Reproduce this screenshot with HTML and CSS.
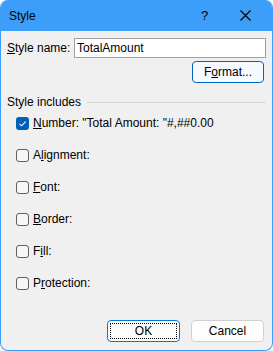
FILE: index.html
```html
<!DOCTYPE html>
<html>
<head>
<meta charset="utf-8">
<link rel="stylesheet" href="styles.css">
</head>
<body>
<div class="window">
  <div class="titlebar">
    <span class="title">Style</span>
    <span class="capbtn help">?</span>
    <span class="capbtn close">
      <svg width="11" height="11" viewBox="0 0 11 11"><path d="M0.5 0.5 L10.5 10.5 M10.5 0.5 L0.5 10.5" stroke="#000" stroke-width="1.1" fill="none"/></svg>
    </span>
  </div>
  <div class="content">
    <div class="name-row">
      <span class="label"><u>S</u>tyle name:</span>
      <div class="input">TotalAmount</div>
    </div>
    <div class="format-row">
      <div class="btn btn-accent">F<u>o</u>rmat...</div>
    </div>
    <div class="group-head">
      <span class="group-title">Style includes</span>
      <span class="group-line"></span>
    </div>
    <div class="checks">
      <div class="check-row"><span class="box checked"><svg width="13" height="13" viewBox="0 0 13 13"><path d="M3.5 6.8 L5.6 8.8 L9.6 4.6" stroke="#fff" stroke-width="1.1" fill="none"/></svg></span><span class="clabel"><u>N</u>umber: "Total Amount: "#,##0.00</span></div>
      <div class="check-row"><span class="box"></span><span class="clabel">A<u>l</u>ignment:</span></div>
      <div class="check-row"><span class="box"></span><span class="clabel"><u>F</u>ont:</span></div>
      <div class="check-row"><span class="box"></span><span class="clabel"><u>B</u>order:</span></div>
      <div class="check-row"><span class="box"></span><span class="clabel">F<u>i</u>ll:</span></div>
      <div class="check-row"><span class="box"></span><span class="clabel">P<u>r</u>otection:</span></div>
    </div>
    <div class="actions">
      <div class="btn btn-ok"><span class="focus">OK</span></div>
      <div class="btn btn-cancel">Cancel</div>
    </div>
  </div>
</div>
</body>
</html>
```
FILE: styles.css
```css
html, body {
  margin: 0;
  padding: 0;
  background: #ffffff;
}
body {
  font-family: "Liberation Sans", Arial, sans-serif;
  font-size: 12px;
  color: #000;
}
.window {
  width: 273px;
  height: 351px;
  box-sizing: border-box;
  border: 1px solid #3c9ef8;
  border-top: none;
  border-radius: 8px;
  background: #f0f0f0;
  overflow: hidden;
  display: flex;
  flex-direction: column;
}
.titlebar {
  height: 31px;
  flex: none;
  background: #3c9ef8;
  display: flex;
  align-items: center;
  padding: 0 6px 0 8px;
}
.title {
  flex: 1;
  font-size: 12px;
  padding-top: 1px;
}
.capbtn {
  width: 41px;
  height: 31px;
  display: flex;
  align-items: center;
  justify-content: center;
}
.help {
  font-size: 13px;
}
.close svg {
  display: block;
}
.content {
  flex: 1;
  display: flex;
  flex-direction: column;
  padding: 7px 6px 8px 6px;
}
.name-row {
  display: flex;
  align-items: center;
  height: 20px;
}
.label {
  width: 67px;
  flex: none;
}
.input {
  flex: 1;
  height: 20px;
  box-sizing: border-box;
  border: 1px solid #a0a0a0;
  background: #fff;
  padding: 0 2px;
  line-height: 18px;
}
.format-row {
  display: flex;
  justify-content: flex-end;
  margin-top: 3px;
  padding-right: 2px;
}
.btn {
  width: 73px;
  height: 22px;
  box-sizing: border-box;
  border-radius: 4px;
  display: flex;
  align-items: center;
  justify-content: center;
  background: #fdfdfd;
}
.btn-accent {
  width: 72px;
  border: 1px solid #0067c0;
  background: #f6fafe;
}
.group-head {
  display: flex;
  align-items: center;
  margin-top: 11px;
  height: 16px;
}
.group-title {
  flex: none;
}
.group-line {
  flex: 1;
  height: 1px;
  background: #d6d6d6;
  margin-left: 6px;
}
.checks {
  display: flex;
  flex-direction: column;
  gap: 12px;
  margin-top: 3px;
  padding-left: 9px;
}
.check-row {
  height: 20px;
  display: flex;
  align-items: center;
}
.box {
  width: 13px;
  height: 13px;
  box-sizing: border-box;
  border: 1px solid #5f5f5f;
  border-radius: 3px;
  background: #f7f7f7;
  margin-right: 4px;
  flex: none;
}
.box.checked {
  border: none;
  background: #005fb8;
}
.box svg {
  display: block;
}
.actions {
  margin-top: auto;
  display: flex;
  justify-content: flex-end;
  gap: 11px;
  padding-right: 2px;
}
.btn-ok {
  border: 1px solid #0078d4;
  padding: 2px;
}
.focus {
  flex: 1;
  align-self: stretch;
  border: 1px dotted #000;
  display: flex;
  align-items: center;
  justify-content: center;
}
.btn-cancel {
  border: 1px solid #d0d0d0;
}
```
